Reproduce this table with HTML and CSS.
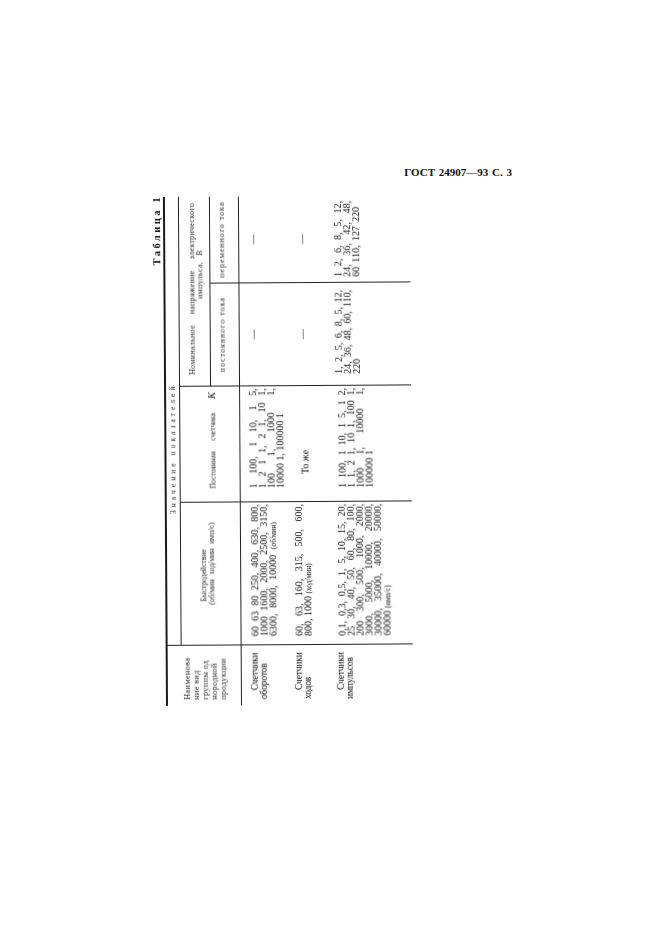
FILE: index.html
```html
<!DOCTYPE html>
<html lang="ru">
<head>
<meta charset="utf-8">
<title>ГОСТ 24907—93 С. 3</title>
<link rel="stylesheet" href="styles.css">
</head>
<body>
<div class="page">
  <div class="running-head">ГОСТ 24907—93 С. 3</div>
  <div class="sheet">
    <div class="rotated">
      <div class="caption">Таблица 1</div>
      <div class="tbl">
        <div class="c h-name br bb">Наименова<br>ние вид<br>группы од<br>нородной<br>продукции</div>
        <div class="c h-zn bb">Значение показателей</div>
        <div class="c h-speed sm br bb">
          <div class="speed-1">Быстродействие</div>
          <div class="speed-2">(об/мин ход/мин имп/с)</div>
        </div>
        <div class="c h-const sm br bb">Постоянная счетчика<i class="k">K</i></div>
        <div class="c h-volt bb">
          <div class="volt-1"><span>Номинальное</span><span>напряжение</span><span>электрического</span></div>
          <div class="volt-2">импульса, В</div>
        </div>
        <div class="c h-dc br bb">постоянного тока</div>
        <div class="c h-ac bb">переменного тока</div>

        <div class="c b name row1 br">Счетчики<br>оборотов</div>
        <div class="c b speed row1 br">
          <div class="j">60 63 80 250, 400, 630, 800,</div>
          <div class="j">1000 1600, 2000, 2500, 3150,</div>
          <div class="j tail">6300, 8000, 10000 <span class="unit">(об/мин)</span></div>
        </div>
        <div class="c b konst row1 br">
          <div class="j">1 100, 1 10, 1 5,</div>
          <div class="j">1 2 1 1, 2 1, 10 1,</div>
          <div class="j">100 1, 1000 1,</div>
          <div>10000 1, 100000 1</div>
        </div>
        <div class="c b dash row1 br">—</div>
        <div class="c b dash row1">—</div>

        <div class="c b name row2 br">Счетчики<br>ходов</div>
        <div class="c b speed row2 br">
          <div class="j">60, 63, 160, 315, 500, 600,</div>
          <div>800, 1000 <span class="unit">(ход/мин)</span></div>
        </div>
        <div class="c b konst same row2 br">То же</div>
        <div class="c b dash row2 br">—</div>
        <div class="c b dash row2">—</div>

        <div class="c b name row3 br">Счетчики<br>импульсов</div>
        <div class="c b speed row3 br">
          <div class="j">0,1, 0,3, 0,5, 1, 5, 10, 15, 20,</div>
          <div class="j">25 30, 40, 50, 60, 80, 100,</div>
          <div class="j">200 300, 500, 1000, 2000,</div>
          <div class="j">3000, 5000, 10000, 20000,</div>
          <div class="j">30000, 35000, 40000, 50000,</div>
          <div>60000 <span class="unit">(имп/с)</span></div>
        </div>
        <div class="c b konst row3 br">
          <div class="j">1 100, 1 10, 1 5, 1 2,</div>
          <div class="j">1 1, 2 1, 10 1, 100 1,</div>
          <div class="j">1000 1, 10000 1,</div>
          <div>100000 1</div>
        </div>
        <div class="c b dc row3 br">
          <div class="j">1, 2, 5, 6, 8, 5, 12,</div>
          <div class="j">24, 36, 48, 60, 110,</div>
          <div>220</div>
        </div>
        <div class="c b ac row3">
          <div class="j">1 2, 6, 8, 5, 12,</div>
          <div class="j">24, 36, 42, 48,</div>
          <div class="j tail-s">60 110, 127 220</div>
        </div>
      </div>
    </div>
  </div>
</div>
</body>
</html>
```

FILE: styles.css
```css
* { box-sizing: border-box; }

html, body {
  margin: 0;
  padding: 0;
  background: #fff;
}

body {
  font-family: "Liberation Serif", "Times New Roman", serif;
  color: #0d0d0d;
}

.page {
  width: 661px;
  height: 935px;
  overflow: hidden;
}

.running-head {
  height: 197px;
  padding: 165px 149px 0 0;
  text-align: right;
  font-weight: bold;
  font-size: 11px;
  line-height: 14px;
  word-spacing: 1px;
}

.sheet {
  width: 263px;
  height: 509px;
  margin-left: 150px;
}

.rotated {
  width: 509px;
  height: 263px;
  transform-origin: 0 0;
  transform: translateY(509px) rotate(-90.35deg);
  will-change: transform;
}

.caption {
  height: 16px;
  padding-top: 4px;
  line-height: 12px;
  text-align: right;
  font-weight: bold;
  font-size: 10.5px;
  letter-spacing: 2.5px;
  margin-right: -2px;
}

.tbl {
  display: grid;
  grid-template-columns: 61px 143px 116px 103px 86px;
  grid-template-rows: 14px 31px 29px 46px 46px 79px;
  border-top: 2px solid #1a1a1a;
}

.c { min-width: 0; }
.br { border-right: 1px solid #222; }
.bb { border-bottom: 1px solid #222; }

.sm {
  font-size: 7.6px;
  line-height: 7.8px;
  color: #2a2a2a;
}

.h-name {
  grid-column: 1;
  grid-row: 1 / 4;
  padding: 15px 0 0 6px;
  font-size: 8.4px;
  line-height: 9px;
  letter-spacing: 0.3px;
  color: #2a2a2a;
}

.h-zn {
  grid-column: 2 / 6;
  grid-row: 1;
  padding-left: 131px;
  font-size: 7.4px;
  line-height: 13px;
  letter-spacing: 3.1px;
  color: #2a2a2a;
}

.h-speed {
  grid-column: 2;
  grid-row: 2 / 4;
  padding: 19px 0 0 40px;
}
.speed-1 { padding-left: 3px; }
.speed-2 { word-spacing: 3px; }

.h-const {
  grid-column: 3;
  grid-row: 2 / 4;
  padding: 26.5px 0 0 13px;
  font-size: 7.4px;
  line-height: 10px;
  word-spacing: 9px;
}
.k {
  font-size: 10px;
  margin-left: 14px;
  color: #0d0d0d;
}

.h-volt {
  grid-column: 4 / 6;
  grid-row: 2;
  padding: 8.5px 6px 0 11px;
  font-size: 8px;
  line-height: 8px;
  color: #2a2a2a;
}
.volt-1 {
  display: flex;
  justify-content: space-between;
  letter-spacing: 0.3px;
}
.volt-2 {
  padding-left: 76px;
  word-spacing: 4px;
  letter-spacing: 0.3px;
}

.h-dc, .h-ac {
  grid-row: 3;
  padding-top: 7.5px;
  text-align: center;
  font-size: 8px;
  line-height: 8px;
  letter-spacing: 1px;
  color: #2a2a2a;
}
.h-dc { grid-column: 4; }
.h-ac { grid-column: 5; }

/* body cells */
.b {
  font-size: 10px;
  line-height: 9px;
}
.j {
  text-align: justify;
  text-align-last: justify;
}
.tail { margin-right: 18px; }
.tail-s { margin-right: 6px; }
.unit { font-size: 7.4px; }

.name {
  padding-left: 6px;
  font-size: 9.6px;
  line-height: 9px;
  letter-spacing: -0.2px;
  text-indent: 9px;
}
.speed { padding-left: 8px; padding-right: 2px; }
.konst { padding-left: 13px; padding-right: 2px; }
.konst.same { padding-left: 27px; }
.dash { text-align: center; }
.dc { padding-left: 11px; padding-right: 7px; }
.ac { padding-left: 5px; padding-right: 5px; }

.row1.name { padding-top: 8.2px; }
.row1.speed { padding-top: 9px; }
.row1.konst { padding-top: 8px; }
.row1.dash { padding-top: 9px; }

.row2.name { padding-top: 5.8px; }
.row2.speed { padding-top: 7.4px; }
.row2.konst { padding-top: 14px; }
.row2.dash { padding-top: 12px; }

.row3.name { padding-top: 2.2px; }
.row3.speed { padding-top: 3.9px; }
.row3.konst { padding-top: 5px; }
.row3.dc, .row3.ac { padding-top: 2.3px; }
```
